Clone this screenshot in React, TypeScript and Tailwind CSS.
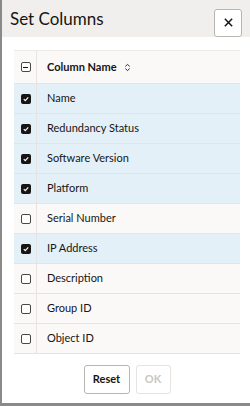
import React, { useState } from 'react';

const COLUMNS = [
  { name: 'Name', on: true },
  { name: 'Redundancy Status', on: true },
  { name: 'Software Version', on: true },
  { name: 'Platform', on: true },
  { name: 'Serial Number', on: false },
  { name: 'IP Address', on: true },
  { name: 'Description', on: false },
  { name: 'Group ID', on: false },
  { name: 'Object ID', on: false },
];

const Check: React.FC<{ state: 'on' | 'off' | 'mixed' }> = ({ state }) => {
  if (state === 'on') {
    return (
      <span className="flex h-[10px] w-[10px] items-center justify-center rounded-[2px] bg-[#161513]">
        <svg viewBox="0 0 10 10" className="h-[8px] w-[8px]">
          <path d="M2.2 5.2 L4.1 7 L7.8 3" fill="none" stroke="#fff" strokeWidth="1.4" />
        </svg>
      </span>
    );
  }
  return (
    <span className="flex h-[10px] w-[10px] items-center justify-center rounded-[2px] border border-[#4a4845] bg-white">
      {state === 'mixed' && <span className="h-px w-[5px] bg-[#161513]" />}
    </span>
  );
};

export default function App() {
  const [cols, setCols] = useState(COLUMNS);

  return (
    <div
      className="flex h-[406px] w-[250px] flex-col border-b-[3px] border-l-2 border-[#8a8a8a] bg-white text-[#161513]"
      style={{ fontFamily: 'Lato, "Noto Sans", sans-serif' }}
    >
      <div className="flex h-[37px] items-center justify-between bg-[#f1efed] pl-[8px] pr-[8px]">
        <h1 className="text-[17px] leading-none">Set Columns</h1>
        <button className="mt-[8px] flex h-[28px] w-[28px] items-center justify-center rounded-[3px] border border-[#b9b6b2] bg-white">
          <svg viewBox="0 0 12 12" className="h-[11px] w-[11px]">
            <path d="M2 2 L10 10 M10 2 L2 10" stroke="#161513" strokeWidth="1.6" />
          </svg>
        </button>
      </div>

      <div className="ml-[12px] mr-[10px] mt-[13px] border-t border-[#eceae7]">
        <div className="flex h-[33px] items-center border-b border-[#e6e3e0] bg-[#fbf9f8]">
          <div className="flex h-full w-[23px] items-center justify-center border-r border-[#e6e3e0] pl-[1px]">
            <Check state="mixed" />
          </div>
          <span className="pl-[10px] text-[11px] font-bold">Column Name</span>
          <svg viewBox="0 0 8 10" className="ml-[7px] h-[9px] w-[7px]">
            <path d="M1.5 3.8 L4 1.5 L6.5 3.8 M1.5 6.2 L4 8.5 L6.5 6.2" fill="none" stroke="#161513" strokeWidth="1" />
          </svg>
        </div>
        {cols.map((c, i) => (
          <div
            key={c.name}
            onClick={() => setCols(cols.map((x, j) => (j === i ? { ...x, on: !x.on } : x)))}
            className={`flex h-[30px] items-center border-b border-[#e6e3e0] ${c.on ? 'bg-[#e4f0f8]' : 'bg-[#fbf9f8]'}`}
          >
            <div className="flex h-full w-[23px] items-center justify-center border-r border-[#e6e3e0] pl-[1px]">
              <Check state={c.on ? 'on' : 'off'} />
            </div>
            <span className="pl-[10px] text-[11px]">{c.name}</span>
          </div>
        ))}
      </div>

      <div className="mt-[11px] flex justify-center gap-[6px] pl-[2px]">
        <button className="h-[29px] w-[46px] rounded-[3px] border border-[#b9b6b2] bg-white text-[11px] font-bold">
          Reset
        </button>
        <button className="h-[29px] w-[35px] rounded-[3px] border border-[#e6e3e0] bg-white text-[11px] font-bold text-[#c9c6c2]">
          OK
        </button>
      </div>
    </div>
  );
}
